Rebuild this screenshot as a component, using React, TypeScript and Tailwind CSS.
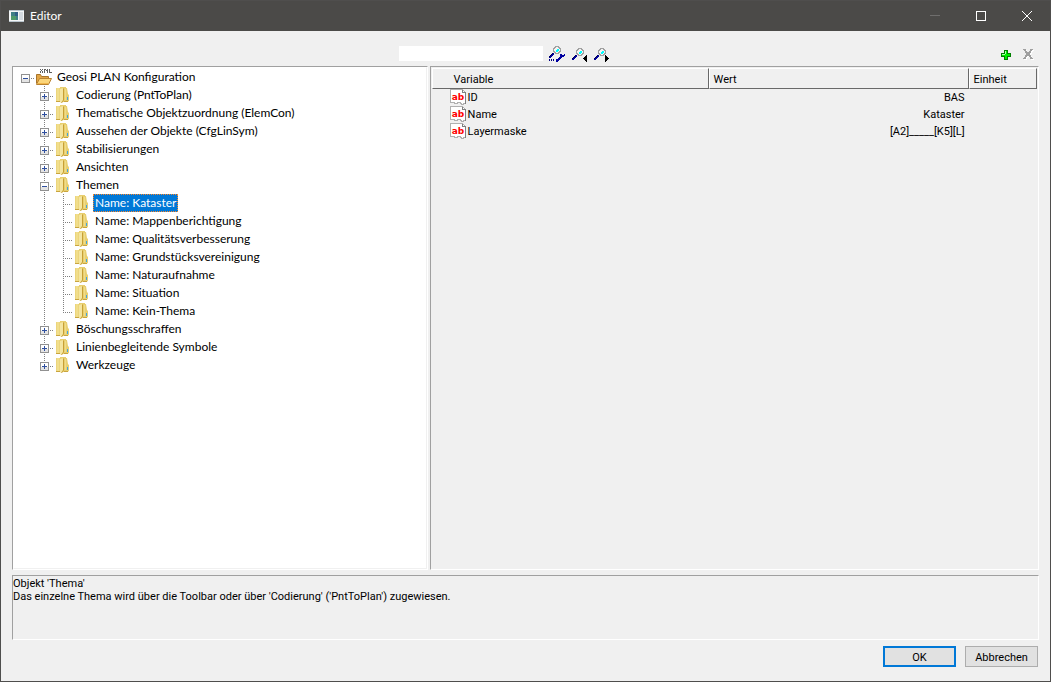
import { useState } from "react";
import type { ReactNode } from "react";

type TreeItem = {
  id: string;
  label: string;
  children?: TreeItem[];
};

type Variable = {
  name: string;
  value: string;
  unit: string;
};

const themes: TreeItem[] = [
  "Kataster",
  "Mappenberichtigung",
  "Qualitätsverbesserung",
  "Grundstücksvereinigung",
  "Naturaufnahme",
  "Situation",
  "Kein-Thema",
].map((name) => ({ id: name, label: `Name: ${name}` }));

const tree: TreeItem = {
  id: "root",
  label: "Geosi PLAN Konfiguration",
  children: [
    { id: "cod", label: "Codierung (PntToPlan)", children: [] },
    { id: "obj", label: "Thematische Objektzuordnung (ElemCon)", children: [] },
    { id: "lin", label: "Aussehen der Objekte (CfgLinSym)", children: [] },
    { id: "stab", label: "Stabilisierungen", children: [] },
    { id: "ans", label: "Ansichten", children: [] },
    { id: "themen", label: "Themen", children: themes },
    { id: "boe", label: "Böschungsschraffen", children: [] },
    { id: "sym", label: "Linienbegleitende Symbole", children: [] },
    { id: "werk", label: "Werkzeuge", children: [] },
  ],
};

const variables: Variable[] = [
  { name: "ID", value: "BAS", unit: "" },
  { name: "Name", value: "Kataster", unit: "" },
  { name: "Layermaske", value: "[A2]_____[K5][L]", unit: "" },
];

export default function App() {
  return (
    <div className="flex min-h-screen flex-col border border-[#4f4e4d] bg-[#f0f0f0] font-['Lato',sans-serif] text-xs text-black">
      <TitleBar />
      <main className="flex grow flex-col px-[11px] pb-[14px]">
        <Toolbar />
        <div className="flex grow gap-[2px]">
          <section className="flex flex-[416] border border-t-[#a0a0a0] border-r-white border-b-white border-l-[#a0a0a0]">
            <Tree />
          </section>
          <section className="flex-[609] border border-t-[#a0a0a0] border-r-white border-b-white border-l-[#a0a0a0] p-px">
            <VariableTable />
          </section>
        </div>
        <div className="mt-[5px] min-h-[65px] border border-t-[#a0a0a0] border-r-white border-b-white border-l-[#a0a0a0] pt-px font-['Roboto',sans-serif] text-[11px] leading-[13px]">
          <p>Objekt 'Thema'</p>
          <p>Das einzelne Thema wird über die Toolbar oder über 'Codierung' ('PntToPlan') zugewiesen.</p>
        </div>
        <div className="mt-[6px] flex justify-end gap-[9px] pr-px font-['Roboto',sans-serif] text-[11px]">
          <button className="h-[21px] w-[73px] border-2 border-[#0078d7] bg-[#e1e1e1] pt-[2px] leading-4">OK</button>
          <button className="h-[21px] w-[73px] border border-[#adadad] bg-[#e1e1e1] pt-[2px] leading-4">Abbrechen</button>
        </div>
      </main>
    </div>
  );
}

function TitleBar() {
  return (
    <header className="flex h-[30px] items-center bg-[#4b4a48] pl-2 text-white">
      <svg width="15" height="12" shapeRendering="crispEdges" aria-hidden="true">
        <path fill="#f4f6f7" d="M0 0h15v12H0z" />
        <path fill="#b9c4cc" d="M0 0h15v1H0zM0 11h15v1H0z" />
        <path fill="#3f7f86" d="M2 2h7v8H2z" />
        <path fill="#4f9a6a" d="M2 6h5v4H2z" />
        <path fill="#2f5f86" d="M6 2h3v4H6z" />
        <path fill="#d3dae0" d="M10 2h4v8h-4z" />
      </svg>
      <h1 className="ml-[6px] grow">Editor</h1>
      <button aria-label="Minimieren" className="flex h-full w-[46px] items-center justify-center">
        <svg width="10" height="10" shapeRendering="crispEdges">
          <path fill="#6f6e6d" d="M0 4h10v1H0z" />
        </svg>
      </button>
      <button aria-label="Maximieren" className="flex h-full w-[46px] items-center justify-center">
        <svg width="10" height="10" shapeRendering="crispEdges">
          <path fill="none" stroke="#fff" d="M.5.5h9v9h-9z" />
        </svg>
      </button>
      <button aria-label="Schließen" className="flex h-full w-[46px] items-center justify-center">
        <svg width="10" height="10">
          <path stroke="#fff" d="M0 0l10 10M10 0L0 10" />
        </svg>
      </button>
    </header>
  );
}

function Toolbar() {
  return (
    <div className="flex h-[35px] items-start pt-[15px]">
      <input aria-label="Suchen" className="ml-[387px] h-[15px] w-[144px] bg-white px-1 outline-none" />
      <div className="ml-[6px] flex gap-[6px]">
        <ToolButton label="Suchoptionen">
          <Magnifier />
          <path fill="#000080" d="M0 13h1v2H0zM2 13h1v2H2zM4 13h1v2H4z" />
          <path
            fill="#0000a0"
            d="M7 14h3v1H7zM7 15h2v1H7zM7 13h4v1H7zM9 12h3v1H9zM10 11h3v1h-3zM11 10h4v1h-4zM11 9h5v1h-5zM11 8h2v1h-2zM15 8h1v1h-1z"
          />
        </ToolButton>
        <ToolButton label="Vorheriger Treffer">
          <g transform="translate(1 2)">
            <Magnifier />
          </g>
          <path fill="#000" d="M15 9h1v7h-1zM14 10h1v5h-1zM13 11h1v3h-1zM12 12h1v1h-1z" />
        </ToolButton>
        <ToolButton label="Nächster Treffer">
          <g transform="translate(1 2)">
            <Magnifier />
          </g>
          <path fill="#000" d="M12 9h1v7h-1zM13 10h1v5h-1zM14 11h1v3h-1zM15 12h1v1h-1z" />
        </ToolButton>
      </div>
      <div className="ml-auto flex gap-3 pt-[3px] pr-[5px]">
        <button aria-label="Hinzufügen">
          <svg width="10" height="10" shapeRendering="crispEdges">
            <path fill="#008000" d="M3 0h4v3h3v4H7v3H3V7H0V3h3z" />
            <path fill="#00f000" d="M4 1h2v3h3v2H6v3H4V6H1V4h3z" />
            <path fill="#b0ffb0" d="M4 1h1v3H4zM1 4h3v1H1z" />
          </svg>
        </button>
        <button aria-label="Löschen" disabled>
          <svg width="11" height="11" shapeRendering="crispEdges">
            <g fill="#fff" transform="translate(1 1)">
              <path d="M0 0h3v2h1v1h2V2h1V0h3v1H9v1H8v2H7v2h1v2h1v1h1v1H7V8H6V7H4v1H3v2H0V9h1V8h1V6h1V4H2V2H1V1H0z" />
            </g>
            <path
              fill="#a0a0a0"
              d="M0 0h3v2h1v1h2V2h1V0h3v1H9v1H8v2H7v2h1v2h1v1h1v1H7V8H6V7H4v1H3v2H0V9h1V8h1V6h1V4H2V2H1V1H0z"
            />
          </svg>
        </button>
      </div>
    </div>
  );
}

function ToolButton({ label, children }: { label: string; children: ReactNode }) {
  return (
    <button aria-label={label}>
      <svg width="16" height="16" viewBox="0 0 16 16" shapeRendering="crispEdges">
        {children}
      </svg>
    </button>
  );
}

function Magnifier() {
  return (
    <>
      <path fill="#f4f4f4" d="M5 1h6v6H5z" />
      <path fill="#00ffff" d="M8 3h2v1H8zM7 4h3v1H7zM7 5h2v1H7z" />
      <path
        fill="#a0a0a0"
        d="M6 0h4v1H6zM5 1h2v1H5zM9 1h2v1H9zM4 2h2v1H4zM10 2h2v1h-2zM4 3h1v2H4zM11 3h1v2h-1zM4 5h2v1H4zM10 5h2v1h-2zM5 6h2v1H5zM9 6h2v1H9zM6 7h4v1H6z"
      />
      <path fill="#0000a0" d="M4 7h1v1H4zM3 8h2v1H3zM2 9h2v1H2zM1 10h2v1H1zM0 11h2v1H0z" />
      <path fill="#000050" d="M3 7h1v1H3zM2 8h1v1H2zM1 9h1v1H1zM0 10h1v1H0z" />
    </>
  );
}

function Tree() {
  const [open, setOpen] = useState<string[]>(["root", "themen"]);
  const [selected, setSelected] = useState("Kataster");

  const toggle = (id: string) => setOpen(open.includes(id) ? open.filter((o) => o !== id) : [...open, id]);

  // guides: for every parent level, whether its vertical line continues below
  const renderItem = (item: TreeItem, guides: boolean[], last: boolean): ReactNode => {
    const isOpen = open.includes(item.id);
    const isRoot = item.id === "root";
    return (
      <li key={item.id} role="treeitem" aria-expanded={item.children ? isOpen : undefined} aria-selected={selected === item.id}>
        <div className="flex h-[18px] items-stretch">
          {guides.map((line, i) => (
            <Guide key={i} up={line} down={line} />
          ))}
          {item.children ? (
            <button aria-label={isOpen ? "Zuklappen" : "Aufklappen"} onClick={() => toggle(item.id)}>
              <Guide up={!isRoot} down={!last} right box={isOpen ? "minus" : "plus"} />
            </button>
          ) : (
            <Guide up down={!last} right />
          )}
          <span className="w-[19px]">{isRoot ? <RootIcon /> : <FolderIcon />}</span>
          <button
            onClick={() => setSelected(item.id)}
            className={
              selected === item.id
                ? "ml-px border border-dotted border-[#ff8728] bg-[#0078d7] px-px leading-4 text-white"
                : "ml-px border border-transparent px-px leading-4"
            }
          >
            {item.label}
          </button>
        </div>
        {isOpen && item.children && item.children.length > 0 && (
          <ul role="group">
            {item.children.map((child, i) =>
              renderItem(child, isRoot ? [false] : [...guides, !last], i === item.children!.length - 1)
            )}
          </ul>
        )}
      </li>
    );
  };

  return (
    <ul role="tree" className="grow border border-t-white border-r-[#f0f0f0] border-b-[#f0f0f0] border-l-white bg-white pl-[2px] whitespace-nowrap">
      {renderItem(tree, [], true)}
    </ul>
  );
}

type GuideProps = {
  up?: boolean;
  down?: boolean;
  right?: boolean;
  box?: "plus" | "minus";
};

function Guide({ up, down, right, box }: GuideProps) {
  return (
    <svg width="19" height="18" shapeRendering="crispEdges" aria-hidden="true" className="block shrink-0">
      <g stroke="#808080" strokeDasharray="1 1">
        {up && <path d="M9.5 0v10" />}
        {down && <path d="M9.5 10v8" />}
        {right && <path d="M9 10.5h10" />}
      </g>
      {box && (
        <>
          <path fill="#fff" stroke="#919191" d="M5.5 6.5h8v8h-8z" />
          <path fill="#e4e4e4" d="M6 11h7v3H6z" />
          <path fill="#2f4f9f" d="M7 10h5v1H7z" />
          {box === "plus" && <path fill="#2f4f9f" d="M9 8h1v5H9z" />}
        </>
      )}
    </svg>
  );
}

function FolderIcon() {
  return (
    <svg width="19" height="18" aria-hidden="true">
      <path fill="#ecd57c" d="M2 2h5v14H2z" />
      <path fill="#f1de8c" d="M3 2h2v13H3z" />
      <path fill="#e8cf70" d="M6 1h6v15H6z" />
      <path fill="#e8cf70" d="M11 2h2l1 6 1 1v6l-2 1h-3z" />
      <path fill="#f4e5a0" d="M6 3l3-1v13l-2 2-1-1z" />
      <path fill="#c79f34" d="M9 3l1-1v12l-2 3H7l2-3z" />
      <path fill="#f0dc88" d="M11 3h1v11h-1z" />
      <path fill="#c9a53f" d="M2 15h4v1H2zM10 15h4v1h-4z" />
      <path fill="#3fa4e4" d="M13 11h1v3h-1z" />
    </svg>
  );
}

function RootIcon() {
  return (
    <svg width="19" height="18" aria-hidden="true">
      <path
        stroke="#606060"
        fill="none"
        shapeRendering="crispEdges"
        d="M5.5 1v1M7.5 1v1M6.5 2v1M5.5 3v2M7.5 3v2M9.5 1v4M10 1.5h1M11 2.5h1M12.5 1v4M14.5 1v4M14 4.5h3"
      />
      <path fill="#e2a545" stroke="#a8752c" d="M1.500 15.500v-9h4l1 2h7v3" />
      <path fill="#fbd57a" stroke="#b98230" d="M1.500 16.500l3-6h12l-3 6z" />
      <path stroke="#f0b54a" d="M3 15.500h10" />
    </svg>
  );
}

function VariableTable() {
  return (
    <table className="w-full table-fixed border-separate border-spacing-0 font-['Roboto',sans-serif] text-[11px]">
      <colgroup>
        <col className="w-[277px]" />
        <col className="w-[260px]" />
        <col />
      </colgroup>
      <thead>
        <tr className="h-[21px] text-left">
          <HeaderCell className="pl-[21px]">Variable</HeaderCell>
          <HeaderCell className="pl-1">Wert</HeaderCell>
          <HeaderCell className="pl-1">Einheit</HeaderCell>
        </tr>
      </thead>
      <tbody>
        {variables.map((v) => (
          <tr key={v.name} className="h-[17px] leading-4">
            <td className="p-0 pl-[18px] align-top">
              <div className="flex gap-[2px]">
                <TextTypeIcon />
                <span className="pt-px">{v.name}</span>
              </div>
            </td>
            <td className="p-0 pt-px pr-1 text-right align-top">{v.value}</td>
            <td className="p-0">{v.unit}</td>
          </tr>
        ))}
      </tbody>
    </table>
  );
}

function HeaderCell({ className, children }: { className: string; children: ReactNode }) {
  return (
    <th
      className={`border border-t-white border-r-[#696969] border-b-[#696969] border-l-white pt-[2px] pb-0 leading-4 font-normal ${className}`}
    >
      {children}
    </th>
  );
}

function TextTypeIcon() {
  return (
    <svg width="16" height="16" aria-hidden="true" className="shrink-0">
      <path
        fill="#fff"
        stroke="#b0b0b0"
        shapeRendering="crispEdges"
        d="M.5.5h12l3 3v11h-2v1h-2v-1h-1v-1h-3v1h-3v-1h-4z"
      />
      <path stroke="#808080" fill="none" shapeRendering="crispEdges" d="M12.500.5v3h3v11" />
      <text x="8" y="11" textAnchor="middle" fill="#f00" fontFamily="DejaVu Sans" fontWeight="bold" fontSize="9">
        ab
      </text>
    </svg>
  );
}
